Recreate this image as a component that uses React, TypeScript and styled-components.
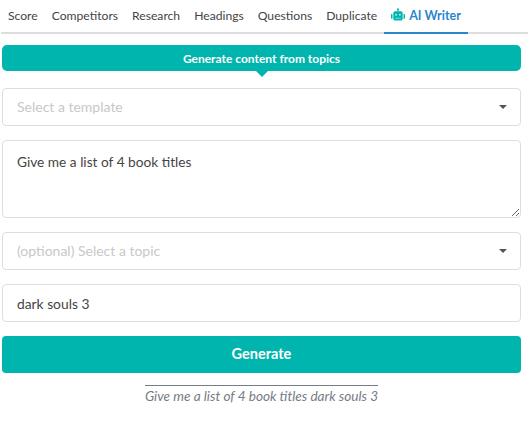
import React from 'react';
import styled, { createGlobalStyle } from 'styled-components';

const GlobalStyle = createGlobalStyle`
  html, body { margin: 0; padding: 0; background: #fff; }
  body { font-family: Lato, "Open Sans", sans-serif; color: #333; }
  * { box-sizing: border-box; }
`;

const Page = styled.div`
  width: 528px;
  height: 424px;
  overflow: hidden;
`;

const Tabs = styled.div`
  display: flex;
  height: 34px;
  margin: 0 0 0 1px;
  width: 527px;
  border-bottom: 2px solid #dddddd;
`;

const Tab = styled.div<{ $active?: boolean }>`
  height: 34px;
  padding: 0 7px 2px;
  display: flex;
  align-items: center;
  gap: 4px;
  font-size: ${(p) => (p.$active ? '12.5px' : '12.15px')};
  white-space: nowrap;
  color: ${(p) => (p.$active ? '#2a85cc' : '#444')};
  font-weight: ${(p) => (p.$active ? 700 : 400)};
  border-bottom: 2px solid ${(p) => (p.$active ? '#2a85cc' : 'transparent')};
`;

const Form = styled.div`
  width: 519px;
  margin: 11px 0 0 2px;
  display: flex;
  flex-direction: column;
`;

const Banner = styled.div`
  position: relative;
  height: 26px;
  border-radius: 5px;
  background: #00b5ad;
  color: #fff;
  font-size: 12px;
  font-weight: 700;
  display: flex;
  align-items: center;
  justify-content: center;
  margin-bottom: 17px;

  &::after {
    content: '';
    position: absolute;
    left: 50%;
    bottom: -6px;
    width: 0;
    height: 0;
    margin-left: -6px;
    border-left: 6px solid transparent;
    border-right: 6px solid transparent;
    border-top: 6px solid #00b5ad;
  }
`;

const Fields = styled.div`
  display: flex;
  flex-direction: column;
  gap: 14px;
`;

const Select = styled.div`
  height: 38px;
  border: 1px solid #dededf;
  border-radius: 4px;
  padding: 0 13px 1px 14px;
  background: #fff;
  display: flex;
  align-items: center;
  justify-content: space-between;
  font-size: 14px;
  color: #c8c8c8;
`;

const Caret = styled.span`
  width: 0;
  height: 0;
  border-left: 4px solid transparent;
  border-right: 4px solid transparent;
  border-top: 4px solid #555;
`;

const TextArea = styled.textarea`
  display: block;
  width: 100%;
  height: 78px;
  border: 1px solid #dededf;
  border-radius: 4px;
  padding: 11px 14px;
  font-family: Lato, sans-serif;
  font-size: 13.7px;
  line-height: 20px;
  color: #444;
  outline: none;
  resize: vertical;
`;

const Input = styled.input`
  display: block;
  width: 100%;
  height: 38px;
  border: 1px solid #dededf;
  border-radius: 4px;
  padding: 0 14px;
  font-family: Lato, sans-serif;
  font-size: 13.8px;
  color: #444;
  outline: none;
`;

const Button = styled.button`
  height: 37px;
  border: 0;
  border-radius: 4px;
  padding: 0 0 2px;
  background: #00b5ad;
  color: #fff;
  font-family: Lato, sans-serif;
  font-size: 14.5px;
  font-weight: 700;
`;

const Caption = styled.div`
  display: flex;
  justify-content: center;
  margin-top: 12px;
`;

const CaptionText = styled.span`
  border-top: 1px solid #767c86;
  padding-top: 1px;
  font-size: 13.6px;
  line-height: 18px;
  font-style: italic;
  color: #767c86;
`;

const RobotIcon = () => (
  <svg width="14" height="14" viewBox="0 0 15 14" fill="#00b5ad">
    <rect x="7" y="0" width="1" height="3" />
    <circle cx="7.5" cy="1" r="1" />
    <rect x="2.5" y="3" width="10" height="10" rx="2" />
    <rect x="0" y="6" width="1.6" height="5" rx="0.6" />
    <rect x="13.4" y="6" width="1.6" height="5" rx="0.6" />
    <circle cx="5.5" cy="6.7" r="1" fill="#fff" opacity="0.75" />
    <circle cx="9.5" cy="6.7" r="1" fill="#fff" opacity="0.75" />
    <rect x="4.5" y="10" width="6" height="1" fill="#fff" opacity="0.5" />
  </svg>
);

const tabNames = ['Score', 'Competitors', 'Research', 'Headings', 'Questions', 'Duplicate'];

export default function App() {
  return (
    <Page>
      <GlobalStyle />
      <Tabs>
        {tabNames.map((name) => (
          <Tab key={name}>{name}</Tab>
        ))}
        <Tab $active>
          <RobotIcon />
          AI Writer
        </Tab>
      </Tabs>
      <Form>
        <Banner>Generate content from topics</Banner>
        <Fields>
          <Select>
            Select a template
            <Caret />
          </Select>
          <TextArea defaultValue="Give me a list of 4 book titles" />
          <Select>
            (optional) Select a topic
            <Caret />
          </Select>
          <Input defaultValue="dark souls 3" />
          <Button>Generate</Button>
        </Fields>
        <Caption>
          <CaptionText>Give me a list of 4 book titles dark souls 3</CaptionText>
        </Caption>
      </Form>
    </Page>
  );
}
